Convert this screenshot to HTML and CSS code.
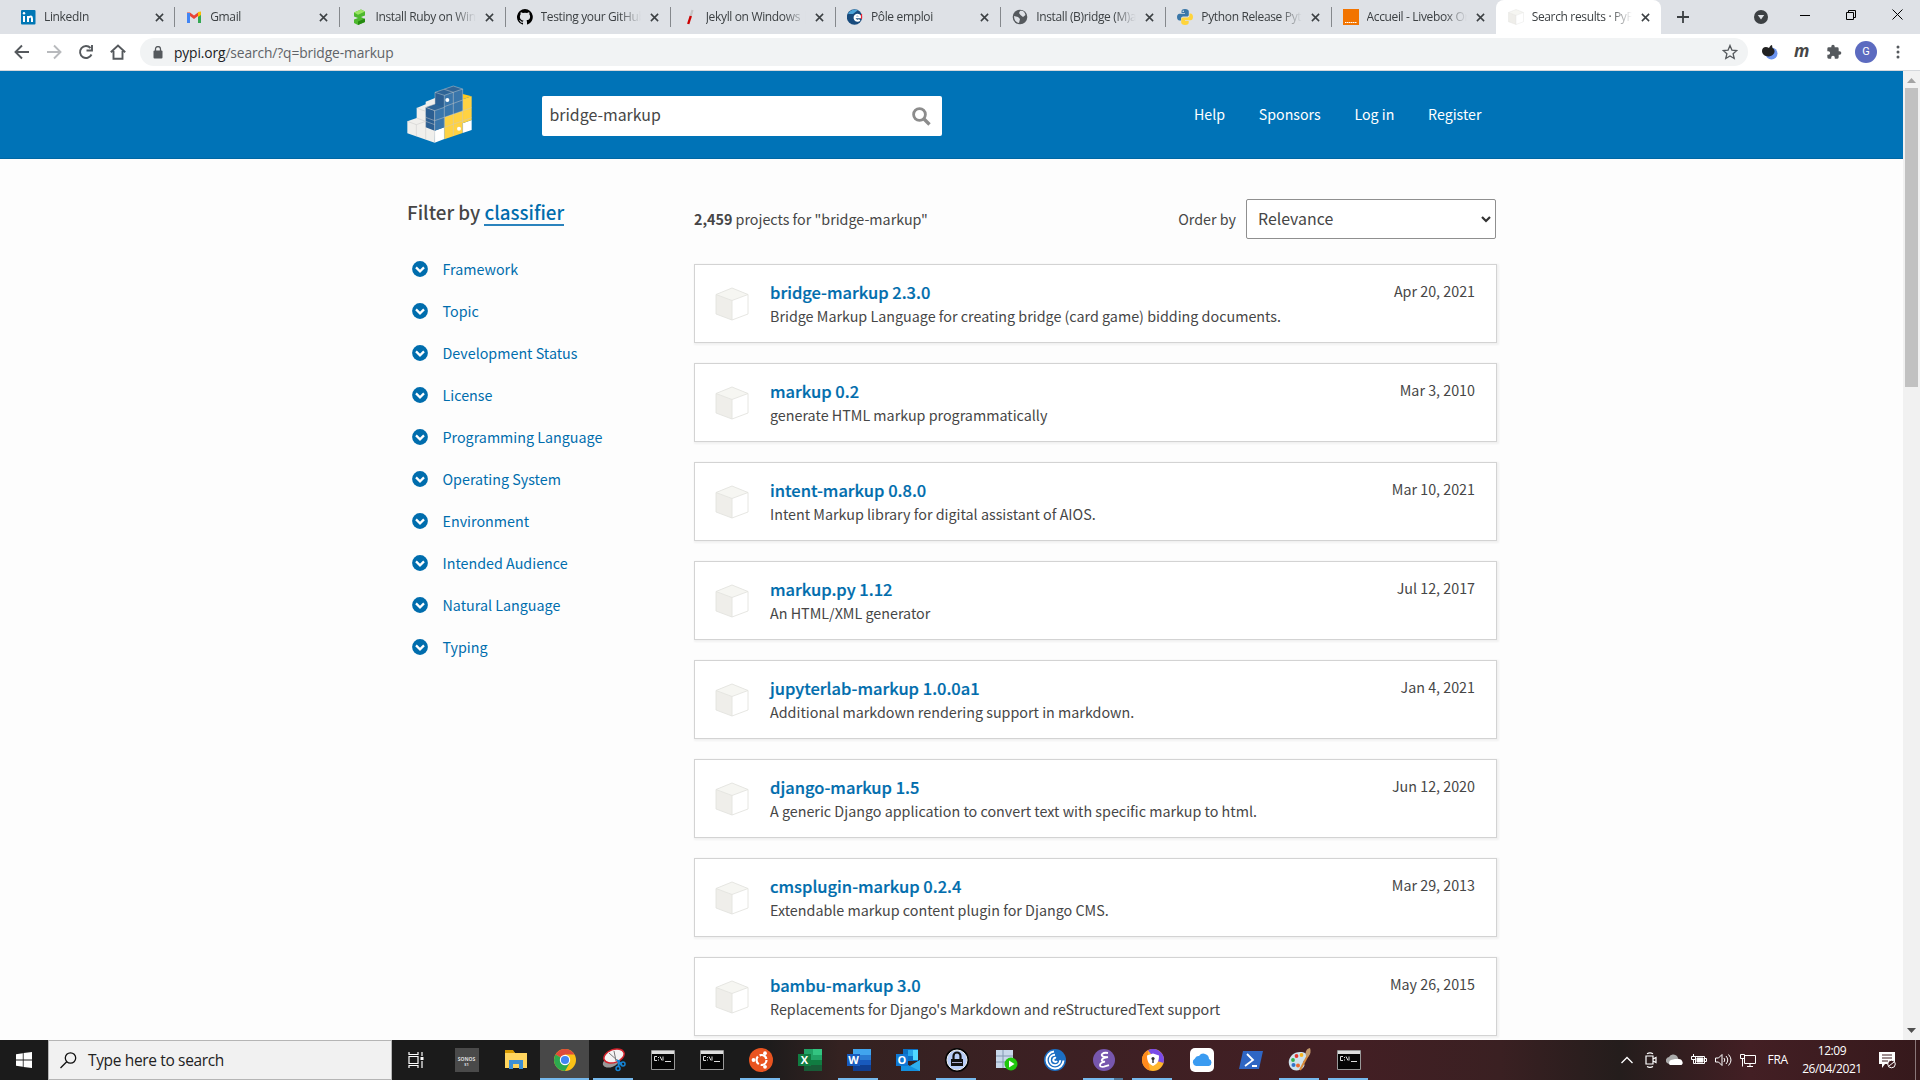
FILE: index.html
```html
<!DOCTYPE html>
<html lang="en">
<head>
<meta charset="utf-8">
<title>Search results · PyPI</title>
<link rel="stylesheet" href="styles.css">
</head>
<body>
<svg class="defs" aria-hidden="true">
  <symbol id="close" viewBox="0 0 10 10"><path d="M1 1l8 8M9 1l-8 8" stroke="#3c4043" stroke-width="1.7" fill="none"/></symbol>
  <symbol id="cube" viewBox="0 0 34 34"><path d="M17 1L33 7.500 17 13.500 1 7.500z" fill="#f6f6f2"/><path d="M1 7.500l16 6V33L1 27z" fill="#efeeea"/><path d="M33 7.500l-16 6V33l16-6z" fill="#fff"/><path d="M17 1L33 7.500V27L17 33 1 27V7.500zM1 7.500l16 6 16-6M17 13.500V33" fill="none" stroke="#e3e3df" stroke-width=".9"/></symbol>
  <symbol id="down" viewBox="0 0 16 16"><circle cx="8" cy="8" r="7.900" fill="#006dad"/><path d="M4 6.400l4 3.900 4-3.900" fill="none" stroke="#fff" stroke-width="2.300"/></symbol>
  <symbol id="cmd" viewBox="0 0 24 20"><path d="M.5.5h23v19H.5z" fill="#050505" stroke="#999"/><path d="M1 1h22v3H1z" fill="#ddd"/><path d="M6 6.500H3.500v4H6M7.500 7v1M7.500 9.500v1M9 6.500l2 4M12 6.500v4M14 11.500h6" stroke="#ddd" fill="none"/></symbol>
</svg>

<div class="tabs">
  <div class="tab first"><svg class="fav" viewBox="0 0 16 16"><rect x="1" y="1" width="14.500" height="14.500" rx="1" fill="#0077b5"/><path d="M4 7v6M8 13V7M8 9q4-3.500 4 1v3" stroke="#fff" stroke-width="2" fill="none"/><circle cx="4" cy="4.200" r="1.200" fill="#fff"/></svg><span>LinkedIn</span><svg class="x"><use href="#close"/></svg></div>
  <div class="tab"><svg class="fav" viewBox="0 0 16 16"><path d="M1 3.500V14h3V7l4 3 4-3V3.500L8 6.500 4 3.500z" fill="#ea4335"/><path d="M1 4h3v10H1z" fill="#4285f4"/><path d="M12 4h3v10h-3z" fill="#34a853"/><path d="M12 3l3-.5V6l-3 2z" fill="#fbbc04"/></svg><span>Gmail</span><svg class="x"><use href="#close"/></svg></div>
  <div class="tab"><svg class="fav" viewBox="0 0 16 16"><path d="M3 3.500L10 .5l4 2v4L10 8l4 2v3l-7 3-4-2v-3.500L7 9 3 7.500z" fill="#4db82e"/><path d="M3 3.500L10 .5l4 2-7 3.200z" fill="#9be564"/><path d="M7 12.500l7-3v3.500l-7 3z" fill="#268a10"/></svg><span>Install Ruby on Windows</span><svg class="x"><use href="#close"/></svg></div>
  <div class="tab"><svg class="fav" viewBox="0 0 16 16"><path fill="#000" d="M8 0a8 8 0 0 0-2.500 15.600c.4.1.5-.2.500-.4v-1.500c-2.200.5-2.700-1-2.700-1-.4-.9-.9-1.200-.9-1.200-.7-.5.1-.5.1-.5.800.1 1.200.8 1.200.8.700 1.300 1.900.9 2.300.7.100-.5.300-.9.500-1.100-1.800-.2-3.600-.9-3.600-4 0-.9.300-1.600.8-2.100-.1-.2-.4-1 .1-2.100 0 0 .7-.2 2.200.8a7.500 7.500 0 0 1 4 0c1.500-1 2.200-.8 2.200-.8.400 1.100.2 1.900.1 2.100.5.600.8 1.300.8 2.200 0 3-1.900 3.700-3.700 3.900.3.300.6.800.6 1.500v2.200c0 .2.100.5.600.4A8 8 0 0 0 8 0z"/></svg><span>Testing your GitHub Pages</span><svg class="x"><use href="#close"/></svg></div>
  <div class="tab"><svg class="fav" viewBox="0 0 16 16"><path d="M10.500 1L8.500 8" stroke="#c5c5c5" stroke-width="2.200"/><path d="M8.800 7L6.200 15" stroke="#c00" stroke-width="2.400"/></svg><span>Jekyll on Windows |</span><svg class="x"><use href="#close"/></svg></div>
  <div class="tab"><svg class="fav" viewBox="0 0 16 16"><circle cx="7.500" cy="8" r="7.700" fill="#174a7c"/><path d="M1 5a8 8 0 0 1 10-4L6 5z" fill="#4ba3d8"/><path d="M7 8.200h6.500a3 3 0 1 0-.8 2.600" stroke="#fff" stroke-width="2" fill="none"/><path d="M14.500 5v5" stroke="#e23" stroke-width="1.200"/></svg><span>Pôle emploi</span><svg class="x"><use href="#close"/></svg></div>
  <div class="tab"><svg class="fav" viewBox="0 0 16 16"><circle cx="8" cy="8" r="7.300" fill="#55595d"/><path d="M8 2c3-1 5 1.500 5.500 4L11 8 8.500 6 7 4zM2 7l4 1 2 2-1 4c-3-.5-5-3-5-7z" fill="#dee1e6"/></svg><span>Install (B)ridge (M)arkup</span><svg class="x"><use href="#close"/></svg></div>
  <div class="tab"><svg class="fav" viewBox="0 0 16 16"><path d="M8 0C5 0 4.500 1 4.500 2.500V4H8v.7H2.500C1 4.700 0 6 0 8s1 3.500 2.500 3.500H4V9.600C4 8.400 5 7.500 6 7.500h4c1 0 1.800-.8 1.800-1.800V2.500C11.800 1 10.500 0 8 0z" fill="#3b77a8"/><path d="M8 16c3 0 3.700-1 3.700-2.500V12H8v-.7h5.500C15 11.300 16 10 16 8s-1-3.500-2.500-3.500h-1v2c0 1.200-1 2-2 2H6c-1 0-1.800.8-1.800 1.800v3.200C4.200 15 5.500 16 8 16z" fill="#ffd43b"/><circle cx="6.200" cy="2.200" r=".7" fill="#fff"/></svg><span>Python Release Python</span><svg class="x"><use href="#close"/></svg></div>
  <div class="tab plain"><svg class="fav" viewBox="0 0 16 16"><path d="M0 0h16v16H0z" fill="#f27400"/><path d="M2 13.500h12" stroke="#fff" stroke-dasharray="1.500 .5"/></svg><span>Accueil - Livebox Orange</span><svg class="x"><use href="#close"/></svg></div>
  <div class="tab active"><svg class="fav" viewBox="0 0 34 34"><use href="#cube" width="34" height="34"/></svg><span>Search results · PyPI</span><svg class="x"><use href="#close"/></svg></div>
  <svg class="plus" viewBox="0 0 12 12"><path d="M6 0v12M0 6h12" stroke="#3c4043" stroke-width="1.800"/></svg>
  <div class="winctl">
    <svg width="14" height="14" viewBox="0 0 14 14"><circle cx="7" cy="7" r="7" fill="#3c4043"/><path d="M3.800 5h6.400L7 9.500z" fill="#dee1e6"/></svg>
    <svg class="up" width="10" height="10"><path d="M0 5.500h10" stroke="#000"/></svg>
    <svg class="up" width="10" height="10" fill="none" stroke="#000"><path d="M.5 2.500h7v7h-7zM2.500 2.500v-2h7v7h-2"/></svg>
    <svg class="up" width="11" height="11"><path d="M.5.5l10 10M10.500.5l-10 10" stroke="#000"/></svg>
  </div>
</div>

<div class="toolbar">
  <div class="nav">
    <svg viewBox="0 0 16 16" fill="none" stroke="#55595d" stroke-width="1.900"><path d="M15 8H2M8 1.500L1.500 8 8 14.500"/></svg>
    <svg viewBox="0 0 16 16" fill="none" stroke="#b8babd" stroke-width="1.900"><path d="M1 8h13M8 1.500L14.500 8 8 14.500"/></svg>
    <svg viewBox="0 0 16 16" fill="none" stroke="#55595d" stroke-width="1.900"><path d="M13.500 10.500A6 6 0 1 1 12.500 4M14 1v5.500H8.500"/></svg>
    <svg viewBox="0 0 16 16" fill="none" stroke="#55595d" stroke-width="1.900"><path d="M0.800 8.300L8 1.500l7.200 6.800M3.500 7v7.800h9V7"/></svg>
  </div>
  <div class="omnibox">
    <svg width="10" height="13" viewBox="0 0 10 13"><rect x=".5" y="4.500" width="9" height="8" rx="1" fill="#55595d"/><path d="M2.500 5V3a2.500 2.500 0 0 1 5 0v2" fill="none" stroke="#55595d" stroke-width="1.300"/></svg>
    <p class="url"><b>pypi.org</b>/search/?q=bridge-markup</p>
    <svg width="16" height="16" viewBox="0 0 16 16"><path d="M8 1.500l1.900 4.600 4.900.4-3.700 3.200 1.100 4.800L8 12l-4.200 2.500 1.100-4.800L1.200 6.500l4.900-.4z" fill="none" stroke="#55595d" stroke-width="1.300"/></svg>
  </div>
  <div class="ext">
    <svg width="17" height="16" viewBox="0 0 17 16"><circle cx="10.500" cy="9.500" r="6" fill="#6b93ee"/><path d="M1 7c0-4 4-5 7-3 1-2 2-3 3-3l.5 3c2 1 3 4 1 6C10 14 1 13 1 7z" fill="#222"/></svg>
    <i class="m">m</i>
    <svg width="16" height="16" viewBox="0 0 24 24"><path d="M20.500 11H19V7a2 2 0 0 0-2-2h-4V3.500a2.500 2.500 0 0 0-5 0V5H4a2 2 0 0 0-2 2v3.800h1.500a2.700 2.700 0 0 1 0 5.400H2V20a2 2 0 0 0 2 2h3.800v-1.500a2.700 2.700 0 0 1 5.400 0V22H17a2 2 0 0 0 2-2v-4h1.500a2.500 2.500 0 0 0 0-5z" fill="#55595d"/></svg>
    <span class="avatar">G</span>
    <svg width="4" height="14" fill="#55595d"><circle cx="2" cy="2" r="1.500"/><circle cx="2" cy="7" r="1.500"/><circle cx="2" cy="12" r="1.500"/></svg>
  </div>
</div>

<div class="viewport">
  <div class="page">
    <header class="site">
      <svg class="logo" viewBox="0 0 240 210">
        <path d="M22 124l28-10V84l27-11V65l28-11v98l-1 36-82-28z" fill="#f0efec"/>
        <path d="M104 152l29-10v35l-29 11zM188 130l27-10v30l-27 9z" fill="#fff"/>
        <path d="M188 42l27 7-27 9z" fill="#ffc91f"/>
        <path d="M188 58l27-9v71l-27 10v29l-55 19v-68l55-18z" fill="#ffd242"/>
        <path d="M77 82l28-10 28 10-29 10zM105 37l55-19 28 9-55 19z" fill="#2f6597"/>
        <path d="M77 82l27 10v60l-27-10zM105 37l28 9v36l-28-10z" fill="#2c5f92"/>
        <path d="M104 92l29-10V46l55-19v65l-55 20v30l-29 10z" fill="#3a76ab"/>
        <path d="M22 124l27 10 28-10M49 134v35M77 106v72M50 84l27 10M50 114l27 10M77 124l27 10M104 152v36M104 122l29-10M133 46v131M160 37v131M188 27v131M133 80l55-20M133 112l82-29M133 142l82-29M77 112l27 10M133 28l27 9M104 92v60M77 82l27 10 29-10M77 82l28-10V37l55-19 28 9-55 19-28-9" fill="none" stroke="#c9c9c9" stroke-width="2" opacity=".75"/>
        <circle cx="142" cy="60" r="6" fill="#fff"/><circle cx="177" cy="146" r="6" fill="#fff"/>
      </svg>
      <div class="search"><span>bridge-markup</span><svg width="19" height="19" viewBox="0 0 19 19"><circle cx="7.500" cy="7.500" r="5.900" fill="none" stroke="#8c8c8c" stroke-width="2.800"/><path d="M12 12l5.500 5.500" stroke="#8c8c8c" stroke-width="3.400"/></svg></div>
      <nav class="links"><a>Help</a><a>Sponsors</a><a>Log in</a><a>Register</a></nav>
    </header>
    <main>
      <aside>
        <h2>Filter by <u>classifier</u></h2>
        <ul>
          <li><svg><use href="#down"/></svg>Framework</li>
          <li><svg><use href="#down"/></svg>Topic</li>
          <li><svg><use href="#down"/></svg>Development Status</li>
          <li><svg><use href="#down"/></svg>License</li>
          <li><svg><use href="#down"/></svg>Programming Language</li>
          <li><svg><use href="#down"/></svg>Operating System</li>
          <li><svg><use href="#down"/></svg>Environment</li>
          <li><svg><use href="#down"/></svg>Intended Audience</li>
          <li><svg><use href="#down"/></svg>Natural Language</li>
          <li><svg><use href="#down"/></svg>Typing</li>
        </ul>
      </aside>
      <section>
        <div class="bar"><p><b>2,459</b> projects for "bridge-markup"</p><label>Order by</label><div class="select"><span>Relevance</span><svg width="10" height="7"><path d="M1 1l4 4 4-4" fill="none" stroke="#333" stroke-width="2.200"/></svg></div></div>
        <article><svg><use href="#cube"/></svg><div><h3>bridge-markup 2.3.0</h3><p>Bridge Markup Language for creating bridge (card game) bidding documents.</p></div><time>Apr 20, 2021</time></article>
        <article><svg><use href="#cube"/></svg><div><h3>markup 0.2</h3><p>generate HTML markup programmatically</p></div><time>Mar 3, 2010</time></article>
        <article><svg><use href="#cube"/></svg><div><h3>intent-markup 0.8.0</h3><p>Intent Markup library for digital assistant of AIOS.</p></div><time>Mar 10, 2021</time></article>
        <article><svg><use href="#cube"/></svg><div><h3>markup.py 1.12</h3><p>An HTML/XML generator</p></div><time>Jul 12, 2017</time></article>
        <article><svg><use href="#cube"/></svg><div><h3>jupyterlab-markup 1.0.0a1</h3><p>Additional markdown rendering support in markdown.</p></div><time>Jan 4, 2021</time></article>
        <article><svg><use href="#cube"/></svg><div><h3>django-markup 1.5</h3><p>A generic Django application to convert text with specific markup to html.</p></div><time>Jun 12, 2020</time></article>
        <article><svg><use href="#cube"/></svg><div><h3>cmsplugin-markup 0.2.4</h3><p>Extendable markup content plugin for Django CMS.</p></div><time>Mar 29, 2013</time></article>
        <article><svg><use href="#cube"/></svg><div><h3>bambu-markup 3.0</h3><p>Replacements for Django's Markdown and reStructuredText support</p></div><time>May 26, 2015</time></article>
      </section>
    </main>
  </div>
  <div class="scroll"><svg width="9" height="5"><path d="M0 5l4.500-5L9 5z" fill="#a3a3a3"/></svg><i></i><svg width="9" height="5"><path d="M0 0l4.500 5L9 0z" fill="#505050"/></svg></div>
</div>

<div class="taskbar">
  <div class="start"><svg width="16" height="16" fill="#fff"><path d="M0 2.200l6.800-1v6.400H0zM7.600 1.100L16 0v7.600H7.600zM0 8.400h6.800v6.400l-6.800-1zM7.600 8.400H16V16l-8.400-1.100z"/></svg></div>
  <div class="find"><svg width="17" height="17" fill="none" stroke="#111" stroke-width="1.300"><circle cx="10.500" cy="6" r="5.200"/><path d="M6.700 9.800L.5 16"/></svg><span>Type here to search</span></div>
  <div class="apps">
    <div class="view"><svg width="16" height="16" fill="none" stroke="#fff" stroke-width="1.200"><path d="M1 0v2.500h9V0M1 4.500h9v7H1zM1 16v-2.500h9V16M14 0v4M14 9v7"/><path d="M12.500 5h3v3h-3z" fill="#fff" stroke="none"/></svg></div>
    <div><span class="sonos">SONOS<small>S1</small></span></div>
    <div><svg width="22" height="20"><path d="M0 1h8l2 2h12v15H0z" fill="#ffd55e"/><path d="M0 0h8l2 3H0z" fill="#d79a00"/><path d="M4 10h14v9h-4v-5H8v5H4z" fill="#3c8fd6"/></svg></div>
    <div class="cur on"><svg width="22" height="22" viewBox="0 0 22 22"><circle cx="11" cy="11" r="11" fill="#fbc116"/><path d="M11 11L1.500 5.500A11 11 0 0 1 20.500 5.500H11z" fill="#de4b3b"/><path d="M11 11L1.500 5.500A11 11 0 0 0 11 22l4.800-8.200z" fill="#2da94f"/><circle cx="11" cy="11" r="5.200" fill="#fff"/><circle cx="11" cy="11" r="4.100" fill="#4285f4"/></svg></div>
    <div class="on"><svg width="24" height="24"><ellipse cx="9" cy="14" rx="8.500" ry="5" fill="#999" transform="rotate(-20 9 14)"/><ellipse cx="12" cy="8" rx="10.500" ry="6.500" fill="#f4f4f4" stroke="#d3222c" stroke-width="1.500" transform="rotate(-20 12 8)"/><path d="M7 5l9 8M12 3l2 10" stroke="#777"/><path d="M15 12l5 5M17 12l-.5 7" stroke="#1684d6" stroke-width="2"/><circle cx="21" cy="16" r="2" fill="none" stroke="#1684d6" stroke-width="1.500"/><circle cx="16" cy="20.500" r="2" fill="none" stroke="#1684d6" stroke-width="1.500"/></svg></div>
    <div><svg width="24" height="20"><use href="#cmd"/></svg></div>
    <div><svg width="24" height="20"><use href="#cmd"/></svg></div>
    <div class="on"><svg width="24" height="24"><circle cx="12" cy="12" r="12" fill="#e95420"/><circle cx="12.500" cy="12" r="5" fill="none" stroke="#fff" stroke-width="2.200" stroke-dasharray="8.500 2"/><g fill="#fff"><circle cx="4.500" cy="12" r="1.900"/><circle cx="16" cy="5.200" r="1.900"/><circle cx="16" cy="18.800" r="1.900"/></g></svg></div>
    <div><svg width="24" height="22"><path d="M6 0h9v22H6z" fill="#21a366"/><path d="M15 0h9v6h-9z" fill="#33c481"/><path d="M15 6h9v5h-9z" fill="#21a366"/><path d="M6 11h9v5H6zM15 11h9v5h-9z" fill="#107c41"/><path d="M6 16h18v6H6z" fill="#185c37"/><path d="M0 5h13v12H0z" fill="#107c41"/><text x="6.500" y="15" class="glyph">X</text></svg></div>
    <div class="on"><svg width="24" height="22"><path d="M6 0h18v6H6z" fill="#41a5ee"/><path d="M6 6h18v5H6z" fill="#2b7cd3"/><path d="M6 11h18v5H6z" fill="#185abd"/><path d="M6 16h18v6H6z" fill="#103f91"/><path d="M0 5h13v12H0z" fill="#185abd"/><text x="6.500" y="15" class="glyph">W</text></svg></div>
    <div><svg width="24" height="22"><path d="M7 0h15v12H7z" fill="#0a6fc2"/><path d="M12 1h5v6h-5z" fill="#28a8ea"/><path d="M17 1h5v10h-5z" fill="#50d9ff"/><path d="M5 12l9 5 10-6v11H5z" fill="#1490df"/><path d="M14 17l10-6v11z" fill="#2eaff0"/><path d="M0 5h12v12H0z" fill="#0f78d4"/><text x="6" y="15" class="glyph">O</text></svg></div>
    <div class="on"><svg width="24" height="24"><circle cx="12" cy="12" r="11" fill="#b8cdf8" stroke="#050505" stroke-width="2"/><circle cx="12" cy="12" r="10" fill="none" stroke="#eee"/><path d="M8.500 11V8a3.500 3.500 0 0 1 7 0v3" fill="none" stroke="#111" stroke-width="2.200"/><path d="M6 11h12v7H6z" fill="#111"/><path d="M7 14.500h10" stroke="#aac"/></svg></div>
    <div><svg width="24" height="22"><path d="M2 1h17v18H2z" fill="#c8d8ea"/><path d="M2 7h17M2 13h17M9 1v18" stroke="#8298b2"/><circle cx="17" cy="15" r="6.500" fill="#1fc70c"/><path d="M15 11.500l5.500 3.500-5.500 3.500z" fill="#fff"/></svg></div>
    <div><svg width="22" height="22" fill="none" stroke="#fff" stroke-width="2"><circle cx="11" cy="11" r="11" fill="#1c6fc4" stroke="none"/><path d="M10 2.500a8.500 8.500 0 1 0 9.500 9M11 5.800a5.200 5.200 0 1 0 5.200 5.400M12 9a2 2 0 1 0 1 3"/></svg></div>
    <div class="on split"><svg width="22" height="22"><circle cx="11" cy="11" r="11" fill="#7757ae"/><path d="M15 4c-5-1-9 2-4 4l4 .2c-6 .5-9 4-3 4.500-6 1-7 6-1 5l5-1.500" fill="none" stroke="#fff" stroke-width="1.800"/></svg></div>
    <div class="on"><svg width="22" height="22"><circle cx="11" cy="11" r="11" fill="#ffb52c"/><path d="M6 1.200A11 11 0 0 1 21.500 14L15 12 9 5z" fill="#7a4be8"/><path d="M6 1.200A11 11 0 0 0 8 21.500L6 12z" fill="#ff8a1e"/><path d="M5 6.500l6-2 6 2c0 5-1 8-6 10.500-5-2.500-6-5.500-6-10.500z" fill="#fff"/><circle cx="11" cy="9.500" r="1.600" fill="#333"/><path d="M11 10v4" stroke="#333" stroke-width="1.400"/></svg></div>
    <div><svg width="24" height="24"><rect width="24" height="24" rx="5" fill="#fff"/><path d="M6 18a4 4 0 0 1-1-7.500A3.500 3.500 0 0 1 9 8a5.500 5.500 0 0 1 10 3 3.700 3.700 0 0 1 0 7z" fill="#3a9bf1"/></svg></div>
    <div><svg width="24" height="18"><path d="M4 0h20l-4 18H0z" fill="#2f66c4"/><path d="M8 3l6 6-8 6M13 15h5" fill="none" stroke="#fff" stroke-width="1.800"/></svg></div>
    <div class="on"><svg width="24" height="24"><path d="M2 19C-2 12 4 4 12 4c7 0 10 5 5 8-4 2 2 4-2 8-3 3-10 4-13-1z" fill="#cfe3ee"/><g><circle cx="5" cy="12" r="1.900" fill="#36b04a"/><circle cx="8.500" cy="8" r="1.900" fill="#e3372e"/><circle cx="13.500" cy="7" r="1.900" fill="#f7b521"/><circle cx="5.500" cy="17" r="2" fill="#3273c8"/><circle cx="10" cy="17.500" r="2" fill="#ee6b2c"/></g><path d="M12 22l8-15" stroke="#d98b3a" stroke-width="2"/><path d="M18 8c-1-4 0-7 4-8 1 3 1 6-2 9z" fill="#c49a6c"/></svg></div>
    <div class="on"><svg width="24" height="20"><use href="#cmd"/></svg></div>
  </div>
  <div class="tray">
    <svg width="12" height="16"><path d="M.5 11L6 5.500 11.500 11" fill="none" stroke="#fff" stroke-width="1.300"/></svg>
    <svg width="12" height="17" fill="none" stroke="#fff" stroke-width="1.200"><path d="M1 4h7v8H1zM8 7l3-1.500v5L8 9M2 1.800q3-1.800 6 0M2 14.500q3 1.800 6 0"/></svg>
    <svg width="17" height="16"><path d="M1 11a3.500 3.500 0 0 1 2-6 5 5 0 0 1 8-1l2 4-8 5z" fill="#aaa"/><path d="M4 13a3 3 0 0 1 1-5l4-1 3 0a4 4 0 0 1 4.500 3 2.500 2.500 0 0 1-1 3z" fill="#fff"/></svg>
    <svg width="16" height="16" fill="none" stroke="#fff"><path d="M4.500 4.500h9v7h-9zM13.500 6.500h2v3h-2M2.500 2v3M.5 4.500h4v3h-4zM2.500 8v3.500h2"/><path d="M6 6h6v4H6z" fill="#fff"/></svg>
    <svg width="17" height="16" fill="none" stroke="#fff"><path d="M.5 6h3L7 2.500v11L3.500 10h-3zM9 6q1.500 2 0 4M11 4q3.500 4 0 8M13.500 2.500q5 5.500 0 11"/></svg>
    <svg width="17" height="16" fill="none" stroke="#fff"><path d="M4.500 3.500h11v8h-11zM10 11.500v3M7 14.500h6M.5 2.500h4v4h-4zM2.500 6.500v8"/></svg>
    <span class="lang">FRA</span>
    <span class="clock">12:09<br>26/04/2021</span>
    <svg width="17" height="17"><path d="M0 0h16v12H6l-3 4v-4H0z" fill="#fff"/><path d="M3 3h10M3 6h10M3 9h6" stroke="#3d1a1e"/><circle cx="12.500" cy="12" r="3.800" fill="#3d1a1e" stroke="#fff"/><path d="M10 14l5-4" stroke="#fff"/></svg>
  </div>
</div>
</body>
</html>
```
FILE: styles.css
```css
* { box-sizing: border-box; margin: 0; padding: 0; }
body { width: 1920px; height: 1080px; overflow: hidden; display: grid; grid-template-rows: 34px 37px 969px 40px; font-family: "Noto Sans CJK SC", sans-serif; color: #464646; background: #fdfdfd; }
svg { display: block; flex: none; }
.defs { position: absolute; width: 0; height: 0; }

.tabs { display: flex; background: #dee1e6; padding-left: 9px; font: 12px "Open Sans", sans-serif; letter-spacing: -.35px; color: #3c4043; }
.tab { width: 165.2px; height: 34px; display: flex; align-items: center; padding: 0 11px 0 12px; position: relative; }
.tab.first { padding: 0 10px 0 11px; }
.tab::after { content: ""; position: absolute; right: -1px; top: 7px; width: 1px; height: 20px; background: #85888c; }
.tab.plain::after, .tab.active::after { display: none; }
.tab.active { background: #fff; border-radius: 8px 8px 0 0; }
.fav { width: 16px; height: 16px; margin-right: 8px; }
.tab span { flex: 1; height: 18px; line-height: 18px; white-space: nowrap; overflow: hidden; margin-right: 9px; -webkit-mask-image: linear-gradient(90deg, #000 78%, transparent); mask-image: linear-gradient(90deg, #000 78%, transparent); }
.x { width: 9px; height: 9px; }
.plus { width: 12px; height: 12px; margin: 11px 0 0 16px; }
.winctl { margin-left: auto; display: flex; align-items: center; gap: 36px; padding-right: 17px; }
.winctl .up { margin-top: -5px; }
.winctl svg:first-child { margin-right: -4px; }

.toolbar { display: flex; align-items: center; background: #fff; border-bottom: 1px solid #d5d8dc; padding: 4px 0; }
.nav { display: flex; gap: 16px; width: 140px; padding-left: 14px; }
.nav svg { width: 16px; height: 16px; }
.omnibox { width: 1608px; height: 28px; border-radius: 14px; background: #f1f3f4; display: flex; align-items: center; padding: 0 10px 0 13px; }
.url { flex: 1; margin-left: 11px; font: 13.800px "Open Sans", sans-serif; letter-spacing: -.12px; color: #5f6368; }
.url b { font-weight: 400; color: #202124; }
.ext { display: flex; align-items: center; flex: 1; padding-left: 13px; }
.m { font: italic bold 17px/18px "Open Sans", sans-serif; margin: -3px 17px 0 16px; width: 15px; }
.avatar { width: 22px; height: 22px; border-radius: 50%; background: #5c6bc0; color: #fff; font: 11px/22px Roboto, sans-serif; text-align: center; margin: 0 19px 0 13px; }

.viewport { display: flex; overflow: hidden; }
.page { width: 1903px; background: #fdfdfd; }
.site { height: 88px; background: #0073b7; border-bottom: 1px solid #0067a3; display: flex; padding-left: 400px; }
.logo { width: 80px; height: 70px; margin-top: 9px; }
.search { margin: 25px 0 0 62px; width: 400px; height: 40px; background: #fff; border-radius: 2px; display: flex; align-items: center; justify-content: space-between; padding: 0 11px 0 7.500px; font-size: 15.900px; line-height: 24px; }
.search span { padding-bottom: 2px; }
.links { display: flex; margin: 31px 0 0 252px; gap: 33.800px; color: #fff; font-size: 14.200px; line-height: 24px; }

main { display: flex; padding: 40px 0 0 407px; }
aside { width: 287px; }
h2 { font-size: 18.800px; font-weight: 500; line-height: 28px; height: 28px; margin-top: -1px; white-space: nowrap; }
h2 u { display: inline-block; text-decoration: none; color: #006dad; height: 28px; border-bottom: 2px solid #2a83bd; line-height: 28px; }
ul { list-style: none; margin-top: 22px; }
li { display: flex; align-items: center; gap: 15px; height: 42px; padding-left: 4.500px; color: #006dad; font-size: 14.300px; line-height: 20px; }
li svg { width: 16px; height: 16px; }
section { width: 803px; font-size: 14.300px; }
.bar { display: flex; align-items: center; height: 40px; margin-bottom: 25px; padding-right: 1px; }
.bar p { flex: 1; }
.bar p, .bar label, .select span { padding-bottom: 2px; }
.select { width: 250px; height: 40px; margin-left: 10px; border: 1px solid #8f8f8f; border-radius: 2px; background: #fff; display: flex; align-items: center; justify-content: space-between; padding: 0 4px 0 11px; font-size: 15.900px; }
article { height: 79px; margin-bottom: 20px; background: #fff; border: 1px solid #d3d3d3; box-shadow: 1px 1px 2px 1px rgba(0,0,0,.05); display: flex; padding: 16px 21px 0 20px; }
article > svg { width: 34px; height: 34px; margin: 6px 21px 0 0; }
article > div { flex: 1; }
h3 { font-size: 16.500px; font-weight: 500; line-height: 23px; color: #006dad; -webkit-text-stroke: .2px #006dad; }
article p { font-size: 14.320px; line-height: 24px; }
time { line-height: 20px; }
.scroll { width: 17px; background: #f1f1f1; display: flex; flex-direction: column; align-items: center; padding: 7px 0; }
.scroll i { width: 13px; height: 299px; background: #c1c1c1; margin: 5px 0 auto; }

.taskbar { display: flex; background: linear-gradient(90deg, #1b1b1b 0, #1b1b1b 760px, #342221 840px, #3c2023 1050px, #431f24 1350px, #3a2022 1500px, #241d1c 1620px, #431f24 1750px, #36191c 1915px); }
.start { width: 48px; padding: 12px 16px; }
.find { width: 344px; background: #f1f1f1; border: 1px solid #b5b5b5; display: flex; align-items: center; padding-left: 11px; gap: 11px; font: 15.500px "Open Sans", sans-serif; letter-spacing: -.35px; color: #222; }
.apps { display: flex; padding-left: 1px; }
.apps > div { width: 49px; height: 40px; display: flex; align-items: center; justify-content: center; position: relative; }
.apps > .view { padding-right: 3px; }
.apps > .cur { background: #484848; }
.apps > .on::after { content: ""; position: absolute; bottom: 0; left: 4px; width: 40px; height: 2px; background: #76b9ed; }
.apps > .cur::after { left: 0; width: 49px; }
.apps > .split::after { background: linear-gradient(90deg, #76b9ed 31px, #4d7698 31px); }
.sonos { width: 24px; height: 24px; background: #4a4a4a; color: #ddd; font: bold 5px/6px "Open Sans", sans-serif; text-align: center; padding-top: 8px; }
.sonos small { display: block; font-size: 4px; }
.glyph { fill: #fff; font: bold 11px "Open Sans", sans-serif; text-anchor: middle; }
.tray { margin-left: auto; display: flex; align-items: center; gap: 8px; color: #fff; font: 12px/18px "Open Sans", sans-serif; letter-spacing: -.4px; border-right: 1px solid #8a7779; margin-right: 4px; padding-right: 19px; }
.tray svg:first-child { margin-right: 4px; }
.tray svg:nth-child(2) { margin-right: 1px; }
.lang { margin: 0 3px 0 2px; letter-spacing: -.2px; }
.clock { width: 66px; text-align: center; margin-right: 6px; }
```
